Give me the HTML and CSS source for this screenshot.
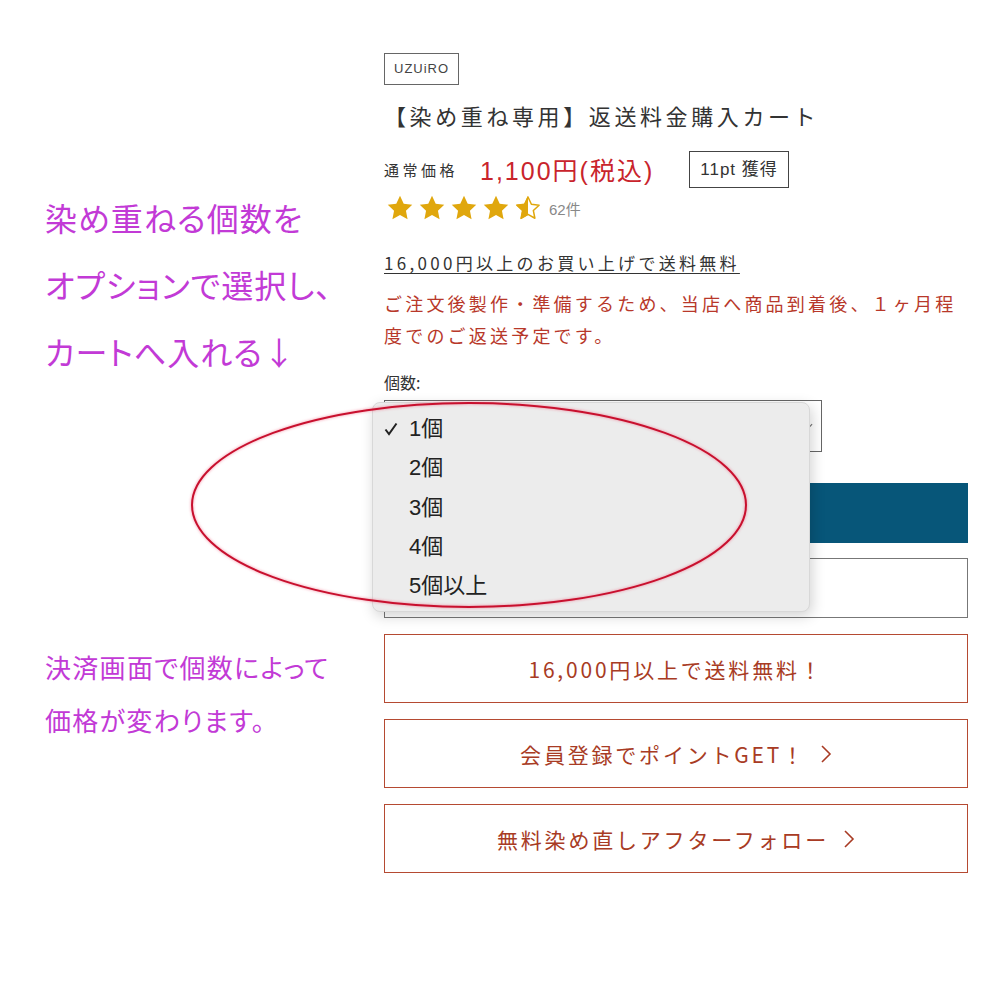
FILE: index.html
```html
<!DOCTYPE html>
<html>
<head>
    <link rel="stylesheet" href="styles.css">
</head>
<body>
    <div class="page">
        <div class="notes">
            <p class="note-big">染め重ねる個数を<br>オプションで選択し、<br>カートへ入れる↓</p>
            <p class="note-small">決済画面で個数によって<br>価格が変わります。</p>
        </div>

        <div class="product">
            <div class="brand">UZUiRO</div>
            <h1 class="title">【染め重ね専用】返送料金購入カート</h1>

            <div class="price-row">
                <span class="price-label">通常価格</span>
                <span class="price">1,100円(税込)</span>
                <span class="points">11pt 獲得</span>
            </div>

            <div class="rating">
                <div class="stars">
                    <svg viewBox="0 0 24 24"><path class="star-fill" d="M12 1.5l3.2 6.8 7.3.9-5.4 5.1 1.4 7.3L12 18l-6.5 3.6 1.4-7.3-5.4-5.1 7.3-.9z"/></svg>
                    <svg viewBox="0 0 24 24"><path class="star-fill" d="M12 1.5l3.2 6.8 7.3.9-5.4 5.1 1.4 7.3L12 18l-6.5 3.6 1.4-7.3-5.4-5.1 7.3-.9z"/></svg>
                    <svg viewBox="0 0 24 24"><path class="star-fill" d="M12 1.5l3.2 6.8 7.3.9-5.4 5.1 1.4 7.3L12 18l-6.5 3.6 1.4-7.3-5.4-5.1 7.3-.9z"/></svg>
                    <svg viewBox="0 0 24 24"><path class="star-fill" d="M12 1.5l3.2 6.8 7.3.9-5.4 5.1 1.4 7.3L12 18l-6.5 3.6 1.4-7.3-5.4-5.1 7.3-.9z"/></svg>
                    <svg viewBox="0 0 24 24">
                        <path class="star-line" d="M12 2.6l2.9 6.2 6.6.8-4.9 4.6 1.3 6.6L12 17.5l-5.9 3.3 1.3-6.6-4.9-4.6 6.6-.8z"/>
                        <path class="star-fill" d="M12 1.5V18l-6.5 3.6 1.4-7.3-5.4-5.1 7.3-.9z"/>
                    </svg>
                </div>
                <span class="count">62件</span>
            </div>

            <a class="shipping" href="#">16,000円以上のお買い上げで送料無料</a>
            <p class="notice">ご注文後製作・準備するため、当店へ商品到着後、１ヶ月程度でのご返送予定です。</p>

            <label class="qty-label">個数:</label>
            <div class="select">
                <svg class="select-arrow" viewBox="0 0 10 6"><polyline points="1,1 5,5 9,1"/></svg>
            </div>

            <div class="cart-btn"></div>
            <div class="fav-btn"></div>

            <div class="links">
                <a class="link-btn" href="#">16,000円以上で送料無料！</a>
                <a class="link-btn" href="#">会員登録でポイントGET！<svg class="chev" viewBox="0 0 12 20"><polyline points="2,2 10,10 2,18"/></svg></a>
                <a class="link-btn" href="#">無料染め直しアフターフォロー<svg class="chev" viewBox="0 0 12 20"><polyline points="2,2 10,10 2,18"/></svg></a>
            </div>

            <!-- open dropdown of the select -->
            <ul class="menu">
                <li><svg class="check" viewBox="0 0 14 14"><polyline points="1.5,7.5 5,12 12.5,1.5"/></svg>1個</li>
                <li>2個</li>
                <li>3個</li>
                <li>4個</li>
                <li>5個以上</li>
            </ul>
        </div>

        <svg class="circle" viewBox="0 0 564 216">
            <ellipse cx="282" cy="108" rx="277" ry="102"/>
        </svg>
    </div>
</body>
</html>
```

FILE: styles.css
```css
body {
    margin: 0;
    background-color: #ffffff;
    font-family: "Noto Sans CJK JP", sans-serif;
    color: #333333;
}

.page {
    position: relative;
    display: flex;
    width: 1000px;
    height: 1000px;
}

/* hand written notes on the left */
.notes {
    width: 384px;
    padding-left: 45px;
    box-sizing: border-box;
    color: #c23ad6;
    font-feature-settings: "palt";
}

.note-big {
    margin: 184px 0 0;
    font-size: 32px;
    line-height: 67px;
    letter-spacing: 1px;
}

.note-small {
    margin: 255px 0 0;
    font-size: 26px;
    line-height: 53px;
    letter-spacing: 1.3px;
}

/* product block */
.product {
    position: relative;
    width: 584px;
    padding-top: 53px;
}

.brand {
    display: inline-block;
    height: 30px;
    line-height: 30px;
    padding: 0 9px;
    border: 1px solid #666;
    font-family: "Liberation Sans", sans-serif;
    font-size: 13px;
    letter-spacing: 1px;
    color: #444;
}

.title {
    margin: 12px 0 0;
    font-size: 22px;
    font-weight: normal;
    line-height: 36px;
    letter-spacing: 3.6px;
    color: #333;
}

.price-row {
    display: flex;
    align-items: center;
    margin-top: 17px;
    height: 38px;
}

.price-label {
    font-size: 15px;
    letter-spacing: 3.5px;
    color: #333;
}

.price {
    margin-left: 22px;
    font-family: "Liberation Sans", "Noto Sans CJK JP", sans-serif;
    font-size: 25px;
    letter-spacing: 2px;
    color: #c9242c;
}

.points {
    margin-left: 35px;
    height: 35px;
    line-height: 35px;
    padding: 0 10px;
    border: 1px solid #444;
    font-family: "Liberation Sans", "Noto Sans CJK JP", sans-serif;
    font-size: 17px;
    letter-spacing: 1px;
    color: #333;
}

.rating {
    display: flex;
    align-items: center;
    margin-top: 6px;
    height: 28px;
}

.stars {
    display: flex;
    gap: 4px;
    margin-left: 2px;
}

.stars svg {
    width: 28px;
    height: 28px;
}

.star-fill {
    fill: #e0a70d;
}

.star-line {
    fill: none;
    stroke: #e0a70d;
    stroke-width: 1.3;
    stroke-linejoin: round;
}

.count {
    margin-left: 7px;
    font-family: "Liberation Sans", "Noto Sans CJK JP", sans-serif;
    font-size: 15px;
    color: #888;
}

.shipping {
    display: block;
    margin-top: 29px;
    font-size: 17px;
    line-height: 24px;
    letter-spacing: 3.3px;
    color: #333;
    text-decoration: underline;
    text-underline-offset: 3px;
}

.notice {
    margin: 12px 0 0;
    font-size: 18px;
    line-height: 32px;
    letter-spacing: 3.2px;
    color: #b8382a;
}

.qty-label {
    display: block;
    margin-top: 19px;
    font-size: 16px;
    line-height: 24px;
    color: #333;
}

.select {
    display: flex;
    align-items: center;
    justify-content: flex-end;
    width: 438px;
    height: 52px;
    margin-top: 6px;
    padding: 0 8px;
    box-sizing: border-box;
    border: 1px solid #666;
}

.select-arrow {
    width: 9px;
    height: 6px;
    fill: none;
    stroke: #777;
    stroke-width: 1.3;
}

.cart-btn {
    height: 60px;
    margin-top: 31px;
    background-color: #075679;
}

.fav-btn {
    height: 58px;
    margin-top: 15px;
    border: 1px solid #777;
}

.links {
    display: flex;
    flex-direction: column;
    gap: 16px;
    margin-top: 16px;
}

.link-btn {
    display: flex;
    align-items: center;
    justify-content: center;
    height: 67px;
    border: 1px solid #b54a32;
    font-size: 21px;
    letter-spacing: 2.8px;
    color: #a83b24;
    text-decoration: none;
}

.chev {
    width: 12px;
    height: 20px;
    margin-left: 14px;
    fill: none;
    stroke: #a83b24;
    stroke-width: 1.6;
}

/* dropdown opened over the select */
.menu {
    position: absolute;
    left: -12px;
    top: 402px;
    width: 438px;
    height: 210px;
    margin: 0;
    padding: 6px 0 0;
    box-sizing: border-box;
    list-style: none;
    background-color: #ececec;
    border: 1px solid #d8d8d8;
    border-radius: 8px;
    box-shadow: 2px 4px 14px rgba(0, 0, 0, 0.18);
}

.menu li {
    position: relative;
    height: 39.3px;
    line-height: 39.3px;
    padding-left: 36px;
    font-family: "Liberation Sans", "Noto Sans CJK JP", sans-serif;
    font-size: 22px;
    color: #222;
}

.check {
    position: absolute;
    left: 11px;
    top: 13px;
    width: 14px;
    height: 14px;
    fill: none;
    stroke: #222;
    stroke-width: 2;
}

/* red marker ring drawn on the screenshot */
.circle {
    position: absolute;
    left: 187px;
    top: 397px;
    width: 564px;
    height: 216px;
    fill: none;
    stroke: #c8102e;
    stroke-width: 2;
    filter: drop-shadow(0 0 1.5px rgba(240, 90, 120, 0.7));
}
```
